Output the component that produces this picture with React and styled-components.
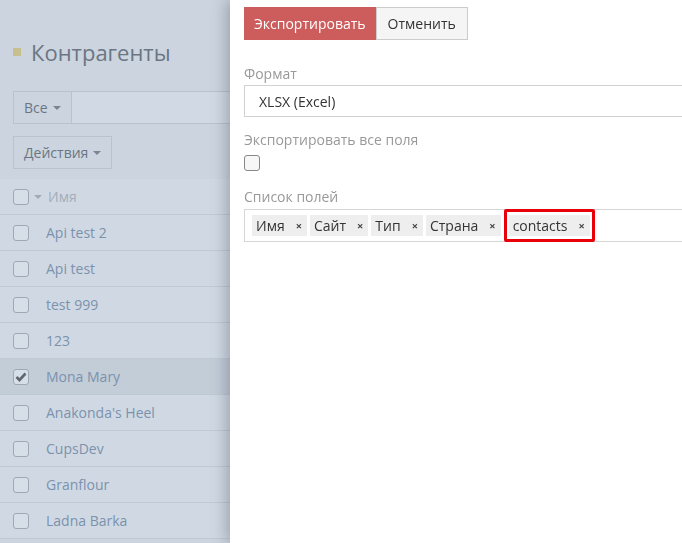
import React from 'react'
import styled, { createGlobalStyle } from 'styled-components'

const GlobalStyle = createGlobalStyle`
  html, body {
    margin: 0;
    padding: 0;
    height: 100%;
    overflow: hidden;
  }
  body {
    font-family: "Open Sans", "Noto Sans", sans-serif;
    font-size: 14px;
    background: #ccd5df;
  }
`

// Dimmed page behind the drawer
const Page = styled.div`
  height: 543px;
  background: #ccd5df;
  padding: 0 0 0 13px;
  box-sizing: border-box;
`

const TitleRow = styled.h1`
  margin: 0;
  padding-top: 44px;
  height: 59px;
  box-sizing: border-box;
  display: flex;
  align-items: center;
  gap: 10px;
  font-size: 22px;
  font-weight: 400;
  color: #6b7583;
`

const Bullet = styled.span`
  width: 8px;
  height: 8px;
  background: #c8bf8e;
`

const FilterBar = styled.div`
  display: flex;
  height: 33px;
  margin-top: 32px;
`

const DimButton = styled.div`
  display: inline-flex;
  align-items: center;
  gap: 5px;
  height: 33px;
  box-sizing: border-box;
  padding: 0 10px;
  border: 1px solid #b9c3ce;
  color: #6b7583;
  background: #ccd5df;
`

const SearchBox = styled.div`
  flex: 1;
  border: 1px solid #b9c3ce;
  border-left: 0;
  background: #d1dae4;
`

const Caret = styled.span`
  width: 0;
  height: 0;
  border-left: 4px solid transparent;
  border-right: 4px solid transparent;
  border-top: 4px solid ${p => p.$light ? '#a0abb7' : '#7b8491'};
`

const ActionsRow = styled.div`
  margin-top: 12px;
  display: flex;
`

const Table = styled.div`
  margin-top: 10px;
  margin-left: -13px;
`

const Row = styled.div`
  display: flex;
  align-items: center;
  height: 36px;
  padding-left: 13px;
  border-bottom: 1px solid #bfcad6;
  box-sizing: border-box;
  background: ${p => p.$selected ? '#c3cdd8' : '#d0d9e3'};
  color: ${p => p.$head ? '#a2adba' : '#7b92ad'};
`

const Check = styled.span`
  width: 16px;
  height: 16px;
  box-sizing: border-box;
  border: 1px solid #9ea9b5;
  border-radius: 3px;
  background: #d6dee7;
  display: inline-flex;
  align-items: center;
  justify-content: center;
  flex-shrink: 0;
`

const HeadCaret = styled.span`
  margin: 0 6px 0 5px;
  display: inline-flex;
`

const RowName = styled.span`
  margin-left: ${p => p.$head ? '0' : '17px'};
`

// Drawer
const Drawer = styled.aside`
  position: fixed;
  top: 0;
  bottom: 0;
  left: 230px;
  width: 560px;
  background: #fff;
  box-shadow: -4px 0 14px rgba(60, 70, 85, 0.35);
  padding: 7px 14px 0 14px;
  box-sizing: border-box;
`

const ButtonRow = styled.div`
  display: flex;
`

const Btn = styled.button`
  height: 33px;
  padding: 0 ${p => p.$primary ? 9 : 11}px;
  font-family: inherit;
  font-size: 14px;
  border: 1px solid ${p => p.$primary ? '#cd5c5c' : '#cccccc'};
  background: ${p => p.$primary ? '#cd5c5c' : '#f5f5f5'};
  color: ${p => p.$primary ? '#fff' : '#333'};
`

const Group = styled.div`
  margin-top: ${p => p.$top || 0}px;
`

const Label = styled.div`
  line-height: 20px;
  color: #999;
  margin-bottom: ${p => p.$gap || 0}px;
`

const Select = styled.div`
  height: 32px;
  border: 1px solid #d2d2d2;
  box-sizing: border-box;
  display: flex;
  align-items: center;
  padding-left: 14px;
  color: #333;
`

const Box = styled.span`
  display: block;
  width: 16px;
  height: 16px;
  box-sizing: border-box;
  border: 1px solid #888;
  border-radius: 3px;
  background: #f7f7f7;
`

const TagInput = styled.div`
  height: 33px;
  border: 1px solid #d6d6d6;
  box-sizing: border-box;
  display: flex;
  align-items: center;
  gap: 3px;
  padding-left: 7px;
`

const Highlight = styled.div`
  border: 3px solid #e8000b;
  border-radius: 2px;
  padding: 3px 2px;
  display: flex;
`

const Tag = styled.span`
  display: inline-flex;
  align-items: center;
  height: 21px;
  padding: 0 5px 0 4px;
  background: #eeeeee;
  color: #333;
  font-size: 14px;
`

const Remove = styled.span`
  font-size: 11px;
  font-weight: 700;
  color: #444;
  margin-left: 11px;
`

const rows = [
  'Api test 2', 'Api test', 'test 999', '123', 'Mona Mary',
  "Anakonda's Heel", 'CupsDev', 'Granflour', 'Ladna Barka'
]

const TickIcon = () => (
  <svg width="12" height="10" viewBox="0 0 12 10">
    <path d="M1.5 5 L4.5 8 L10.5 1.5" fill="none" stroke="#5f6670" strokeWidth="2.6" />
  </svg>
)

export default function App() {
  return (
    <>
      <GlobalStyle />
      <Page>
        <TitleRow><Bullet />Контрагенты</TitleRow>
        <FilterBar>
          <DimButton>Все <Caret /></DimButton>
          <SearchBox />
        </FilterBar>
        <ActionsRow>
          <DimButton>Действия <Caret /></DimButton>
        </ActionsRow>
        <Table>
          <Row $head>
            <Check />
            <HeadCaret><Caret $light /></HeadCaret>
            <RowName $head>Имя</RowName>
          </Row>
          {rows.map(name => (
            <Row key={name} $selected={name === 'Mona Mary'}>
              <Check>{name === 'Mona Mary' && <TickIcon />}</Check>
              <RowName>{name}</RowName>
            </Row>
          ))}
        </Table>
      </Page>

      <Drawer>
        <ButtonRow>
          <Btn $primary>Экспортировать</Btn>
          <Btn>Отменить</Btn>
        </ButtonRow>
        <Group $top={24}>
          <Label $gap={1}>Формат</Label>
          <Select>XLSX (Excel)</Select>
        </Group>
        <Group $top={13}>
          <Label $gap={5}>Экспортировать все поля</Label>
          <Box />
        </Group>
        <Group $top={16}>
          <Label $gap={2}>Список полей</Label>
          <TagInput>
            {['Имя', 'Сайт', 'Тип', 'Страна'].map(t => (
              <Tag key={t}>{t}<Remove>×</Remove></Tag>
            ))}
            <Highlight>
              <Tag>contacts<Remove>×</Remove></Tag>
            </Highlight>
          </TagInput>
        </Group>
      </Drawer>
    </>
  )
}
